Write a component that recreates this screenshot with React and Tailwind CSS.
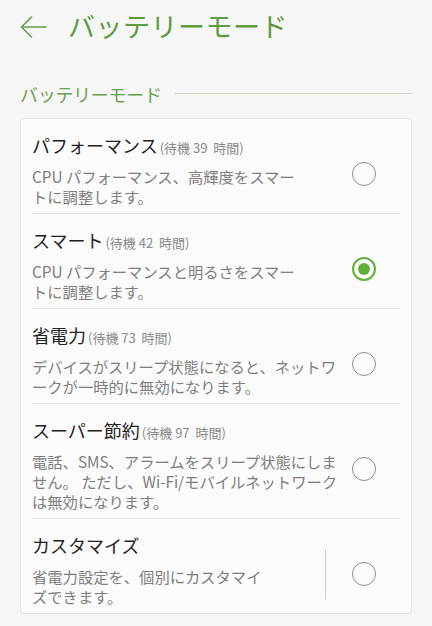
import React from "react";

const font = { fontFamily: '"Noto Sans CJK JP", "Noto Sans", sans-serif' };

function Radio({ checked }) {
  if (checked) {
    return (
      <div className="w-[24px] h-[24px] rounded-full border-[2.5px] border-[#5fb13a] flex items-center justify-center">
        <div className="w-[12px] h-[12px] rounded-full bg-[#5fb13a]" />
      </div>
    );
  }
  return <div className="w-[24px] h-[24px] rounded-full border border-[#8c8c8c]" />;
}

const items = [
  {
    title: "パフォーマンス",
    hours: "39",
    lines: ["CPU パフォーマンス、高輝度をスマー", "トに調整します。"],
  },
  {
    title: "スマート",
    hours: "42",
    lines: ["CPU パフォーマンスと明るさをスマー", "トに調整します。"],
    checked: true,
  },
  {
    title: "省電力",
    hours: "73",
    lines: ["デバイスがスリープ状態になると、ネットワ", "ークが一時的に無効になります。"],
  },
  {
    title: "スーパー節約",
    hours: "97",
    lines: [
      "電話、SMS、アラームをスリープ状態にしま",
      "せん。 ただし、Wi-Fi/モバイルネットワーク",
      "は無効になります。",
    ],
  },
  {
    title: "カスタマイズ",
    lines: ["省電力設定を、個別にカスタマイ", "ズできます。"],
    divider: true,
  },
];

export default function App() {
  return (
    <div className="w-[432px] h-[626px] bg-[#f6f6f6] overflow-hidden" style={font}>
      <div className="h-[52px] flex items-center pl-[20px]">
        <svg width="27" height="22" viewBox="0 0 27 22" fill="none" className="mt-[1px]">
          <path d="M26 11H1.5M11.5 1L1.5 11L11.5 21" stroke="#62a044" strokeWidth="1.6" strokeLinecap="round" strokeLinejoin="round" />
        </svg>
        <div className="ml-[21px] text-[27px] leading-[34px] text-[#5f9b40] tracking-[0.5px]">バッテリーモード</div>
      </div>
      <div className="mt-[30px] flex items-center pl-[20px] pr-[20px]">
        <div className="text-[18px] leading-[24px] text-[#6aa04f] tracking-[-0.3px]">バッテリーモード</div>
        <div className="flex-1 h-px bg-[#cbd9c2] ml-[13px] mt-[-2px]" />
      </div>
      <div className="mt-[12px] mx-[20px] bg-[#fbfbfb] border border-[#e2e2e2] rounded-[3px] px-[11px]">
        {items.map((it, i) => (
          <div key={i} className={i < items.length - 1 ? "border-b border-[#e6e6e6]" : ""}>
            <div className="flex items-center pt-[14px] pb-[7px]">
              <div className="flex-1 min-w-0 whitespace-nowrap">
                <div className="h-[24px] flex items-baseline text-[#222222]">
                  <span className="text-[18px] leading-[24px]">{it.title}</span>
                  {it.hours && (
                    <span className="text-[13px] leading-none text-[#8a8a8a] ml-[2px]">
                      (待機 {it.hours}&nbsp;&nbsp;時間)
                    </span>
                  )}
                </div>
                <div className="mt-[9px] text-[15.3px] leading-[20px] text-[#7e7e7e]">
                  {it.lines.map((l, j) => (
                    <div key={j}>{l}</div>
                  ))}
                </div>
              </div>
              {it.divider && <div className="w-px h-[50px] bg-[#cfcfcf] mt-[8px] mr-[26px]" />}
              <div className="w-[48px] flex justify-start mt-[8px] shrink-0">
                <Radio checked={it.checked} />
              </div>
            </div>
          </div>
        ))}
      </div>
    </div>
  );
}
